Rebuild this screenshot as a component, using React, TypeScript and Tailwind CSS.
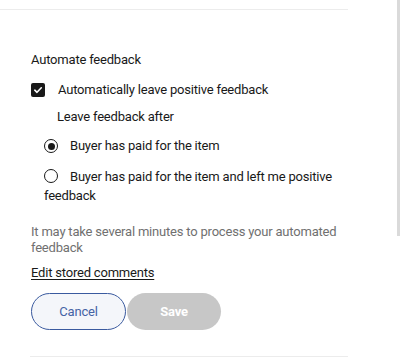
import React from "react";

export default function App() {
  return (
    <div className="relative w-[400px] h-[361px] bg-white overflow-hidden" style={{ fontFamily: "Roboto, 'Liberation Sans', sans-serif" }}>
      <div className="absolute right-0 top-0 w-[3px] h-[236px] bg-[#dadada]" />
      <div className="w-[348px] pt-[9px]">
        <div className="h-px bg-[#ececec]" />
        <div className="pl-[31px] pt-[40px] text-[13px] tracking-[-0.2px] text-[#191919]">
          <div className="leading-[20px]">Automate feedback</div>
          <label className="flex items-center mt-[10px] h-[20px]">
            <span className="w-[14px] h-[14px] rounded-[2px] bg-[#191919] flex items-center justify-center">
              <svg width="10" height="10" viewBox="0 0 10 10">
                <path d="M1.8 5.2 L4 7.3 L8.3 2.8" stroke="white" strokeWidth="1.6" fill="none" strokeLinecap="round" strokeLinejoin="round" />
              </svg>
            </span>
            <span className="ml-[13px]">Automatically leave positive feedback</span>
          </label>
          <div className="pl-[26px] mt-[7px] leading-[20px]">Leave feedback after</div>
          <div className="pl-[13px] mt-[9px]">
            <div className="flex items-center h-[20px]">
              <span className="w-[14px] h-[14px] rounded-full border-[1.5px] border-[#191919] flex items-center justify-center">
                <span className="w-[7px] h-[7px] rounded-full bg-[#191919]" />
              </span>
              <span className="ml-[12px]">Buyer has paid for the item</span>
            </div>
            <div className="mt-[11px] leading-[19px] pr-[10px]">
              <span className="inline-block align-[-2px] w-[14px] h-[14px] rounded-full border-[1.2px] border-[#191919]" />
              <span className="ml-[12px]">Buyer has paid for the item and left me positive feedback</span>
            </div>
          </div>
          <div className="mt-[19px] text-[#707070] leading-[16px] pr-[4px]">
            It may take several minutes to process your automated feedback
          </div>
          <div className="mt-[8px] leading-[18px]">
            <a className="underline underline-offset-[2px] text-[#191919]">Edit stored comments</a>
          </div>
          <div className="flex mt-[11px]">
            <button className="w-[95px] h-[37px] rounded-full border-[1.5px] border-[#3a5a9f] bg-[#f4f6fa] text-[#4563a5] text-[13px]">
              Cancel
            </button>
            <button className="ml-px w-[94px] h-[37px] rounded-full bg-[#c7c7c7] text-white font-bold text-[13px]">
              Save
            </button>
          </div>
          <div className="mt-[26px] h-px bg-[#ececec] -ml-px" />
        </div>
      </div>
    </div>
  );
}
